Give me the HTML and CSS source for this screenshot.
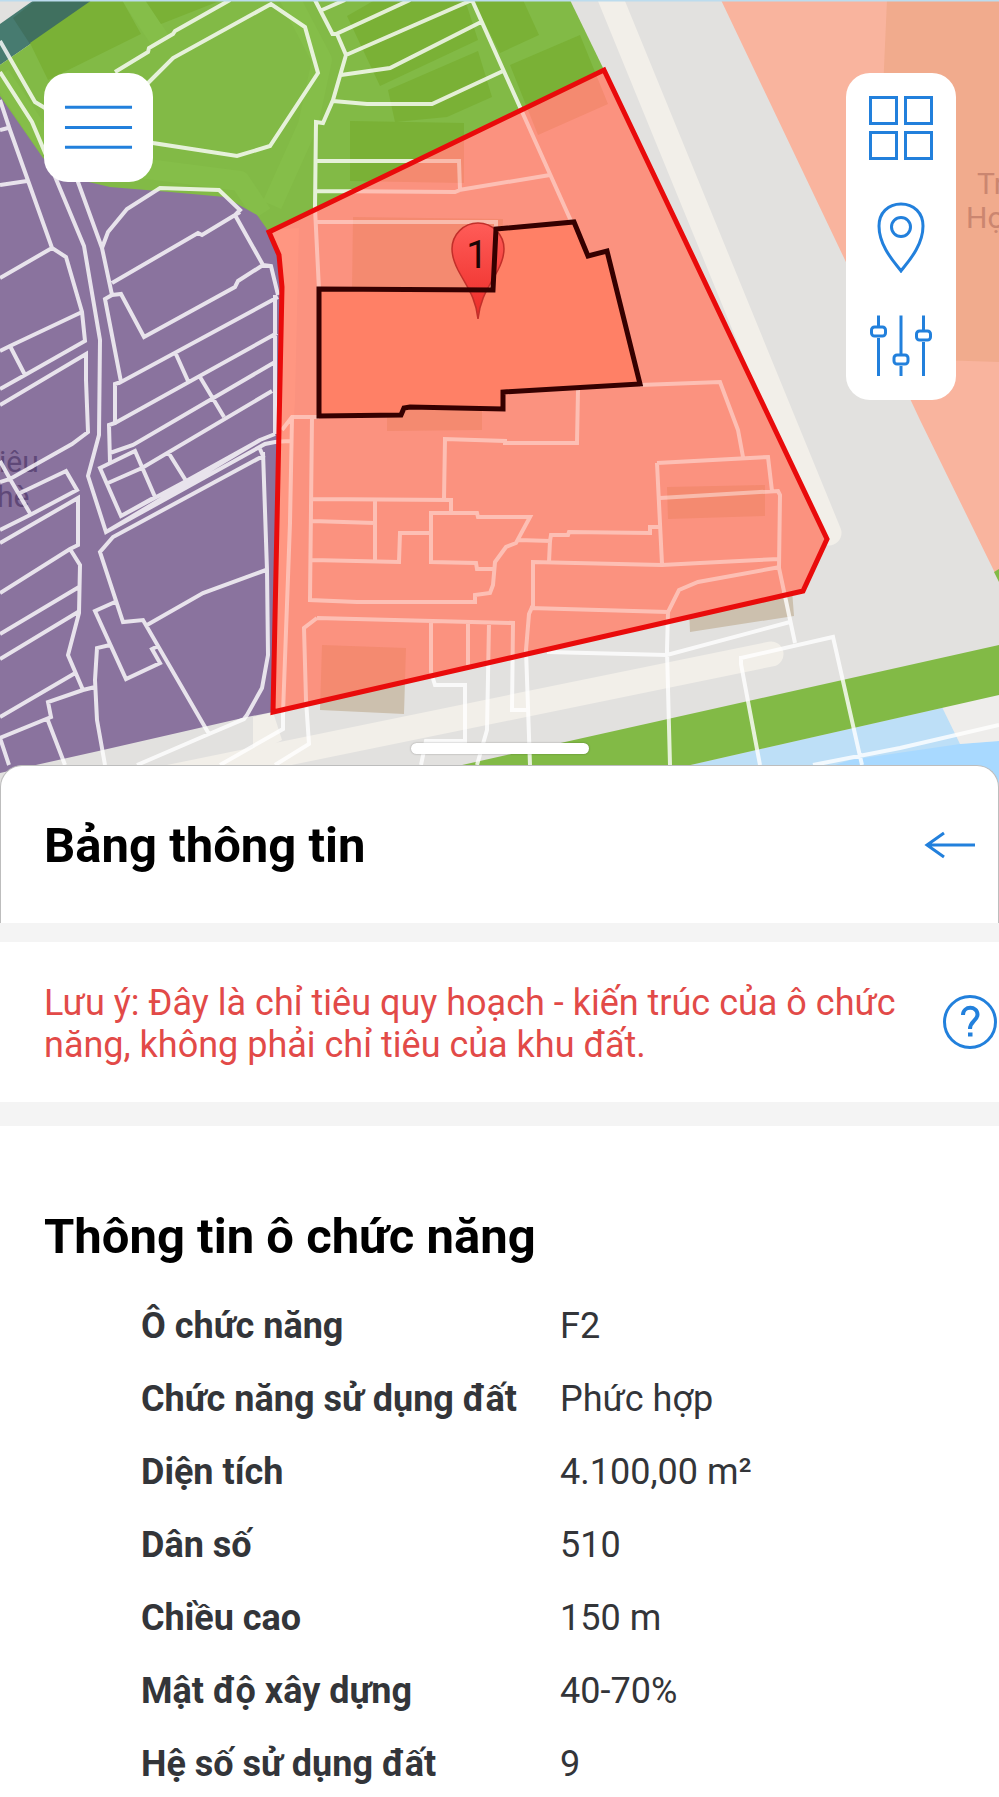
FILE: index.html
```html
<!DOCTYPE html>
<html lang="vi">
<head>
<meta charset="utf-8">
<meta name="viewport" content="width=device-width, initial-scale=1">
<title>Bảng thông tin</title>
<link rel="stylesheet" href="styles.css">
</head>
<body>
<main class="app">
  <section class="map" aria-label="Bản đồ quy hoạch">
    <svg class="map-canvas" viewBox="0 0 999 790" preserveAspectRatio="xMidYMin slice">
      <defs>
        <linearGradient id="pin" x1="0" y1="0" x2="0" y2="1">
          <stop offset="0" stop-color="#ff5c58"/>
          <stop offset="1" stop-color="#ec2b27"/>
        </linearGradient>
        <clipPath id="zone-clip"><path id="zone" d="M269 232L604 70L827 539L803 591L273 712L282 287L279 255Z"/></clipPath>
        <path id="lots" d="M0 41L35 102L45 108L62 142L78 182L102 248L112 295M0 72L32 122L46 155L84 246L100 340L99 435L88 476L106 532L260 440L275 434
          M0 100L10 130L52 248L66 257L82 312L85 341L25 375L0 389M10 346L25 375M82 312L10 346L0 351M0 130L8 128M0 185L27 181M0 278L52 248
          M0 405L86 354L86 380L88 432L72 444L10 479L0 482
          M102 248L108 232L127 209L160 188L219 190L240 210L235 215L263 265L271 266L278 295M112 283L198 233L202 235L240 212
          M112 295L121 294L144 337L235 287L238 281L263 265M112 295L105 299L121 382L278 297M175 352L188 381M200 377L224 417
          M115 423L277 333M121 382L115 384L115 423L109 425L110 462M110 453L133 445L275 362M275 295L275 434
          M100 468L135 451L155 497L121 516ZM108 483L142 468L272 391M168 452L188 484M121 516L188 480L260 440
          M106 532L265 444L275 442L290 441M260 449L263 456L113 537L100 552L123 622L143 620L209 734M263 452L267 570L268 655L262 688L247 715L244 719L209 734L137 765
          M147 625L203 593L266 570M115 602L95 611L126 679L160 663L152 649L158 646M110 645L97 648L95 680L97 720L105 765
          M20 493L66 471L77 490L30 515L0 530M0 461L10 479L31 515M0 543L78 498L78 545L70 549L0 593M70 549L80 565L79 613L68 655L83 690
          M0 634L79 587M0 659L78 612M0 717L77 672M95 687L83 690L48 702L51 717L0 738M47 718L65 765M0 738L9 765
          M148 83L173 58L271 4L305 27L318 73L270 146L237 156L153 143L110 120ZM115 72L148 52L149 48L173 34L175 31L230 0
          M315 0L333 35M322 10L345 0M410 0L336 34L332 34M337 34L346 55L333 100L323 123L316 122L315 208L319 290
          M346 55L472 0M341 75L390 68L481 22M333 101L367 104L432 104L503 71M472 0L571 221M315 161L459 161L460 190L455 192L315 191M459 190L550 175M316 222L496 222L496 228
          M292 418L290 523L283 713L283 729L220 765M282 430L292 417L319 417
          M317 618L304 628L306 700L309 744L275 765M312 417L310 600L357 602L475 602L475 595L490 593L493 585L495 562L506 547L516 543L530 517L478 517L477 513L431 513L431 562L476 563L477 569L494 569
          M312 499L451 500L451 513M312 521L375 523M375 500L375 560M312 560L399 562L400 533L431 533M444 499L445 439L505 441L505 443L577 443L578 390
          M518 540L550 541L551 535L568 535L569 532L650 533L650 527L660 527M550 541L549 562M533 607L533 562L662 565L700 563L779 559M530 608L668 612M533 605L529 614L526 650L530 765
          M657 463L662 564M657 463L768 457L772 491M743 457L738 430L720 382L640 385M660 498L778 491L780 495L779 568L795 643
          M780 567L698 582L679 590L668 612L667 650L670 765M547 652L667 655L790 622M741 658L833 637L862 765M741 656L741 664L760 765
          M317 618L433 621L513 623L512 710L527 710M431 621L431 672L435 685L465 685L465 741L426 741L421 765M468 622L468 665M489 623L487 730L477 765
          M813 765L900 748L999 725"/>
      </defs>

      <rect width="999" height="790" fill="#e2e1df"/>

      <!-- roads -->
      <path d="M609 -5L829 533M771 654L-10 814" fill="none" stroke="#f2efe9" stroke-width="25" stroke-linecap="round"/>
      <path d="M253 717L273 712L282 740L253 755Z" fill="#f2efe9"/>

      <!-- park and canal -->
      <path d="M0 24L34 0H94L0 65Z" fill="#477b70"/>
      <path d="M13 18L36 0H94L30 44Z" fill="#40705f"/>
      <path d="M0 65L94 0H570L606 74L300 260L0 200Z" fill="#82ba46"/>
      <path d="M288 -5L322 60L308 125L272 205M140 168L240 181L262 214M130 -5L160 40M0 75L50 150" fill="none" stroke="#85be49" stroke-width="20" stroke-linejoin="round"/>
      <path d="M30 43L92 0H122L141 34L48 80ZM145 0L161 24L222 0ZM347 16L375 0H465L478 40L380 86ZM388 90L478 51L492 97L447 117L395 122ZM473 0H523L539 35L500 53ZM510 65L580 35L608 104L538 135ZM350 121L464 123V183L350 181Z" fill="#7ab136"/>

      <!-- residential block -->
      <path d="M0 96L43 158L80 180L110 187L170 192L225 197L257 215L269 232L279 255L282 287L273 712L247 717L103 750L0 773Z" fill="#8a739e"/>
      <g class="place place-violet"><text x="-1" y="472">iêu</text><text x="-3" y="507">hè</text></g>

      <!-- education block -->
      <path d="M721 0H999V581L995 573L920 420L845 260Z" fill="#f9b49e"/>
      <path d="M887 0H999V362L880 358L883 90Z" fill="#f1ab8d"/>
      <g class="place place-peach"><text x="977" y="194">Tr</text><text x="966" y="228">Họ</text></g>

      <!-- river bank -->
      <path d="M994 572L999 569V582Z" fill="#82ba46"/>
      <path d="M620 781L999 695V790H600Z" fill="#bddff7"/>
      <path d="M850 760L960 744L999 741V790H760Z" fill="#a8d9ff"/>
      <path d="M942 707L999 694V741L960 744Z" fill="#eeedeb"/>
      <path d="M395 780L999 645V695L620 781Z" fill="#82ba46"/>
      <path d="M322 645L406 648L404 714L320 710ZM689 608L792 590L794 616L690 632Z" fill="#ccc0ae"/>

      <use class="lots" href="#lots"/>

      <!-- planning zone -->
      <use href="#zone" fill="#fb927f"/>
      <g clip-path="url(#zone-clip)">
        <path d="M269 230L299 228L295 400L288 530L284 712H272Z" fill="#ff9681"/>
        <path d="M322 645L406 648L404 714L320 710ZM387 408H482V430L387 431ZM667 487L765 485V516L668 519ZM353 217L503 219L500 290H352ZM350 121L464 123V183L350 181ZM510 65L580 35L608 104L538 135Z" fill="#f48a70"/>
        <use class="lots lots-inside" href="#lots"/>
      </g>
      <use class="zone-line" href="#zone"/>

      <!-- selected parcel -->
      <path d="M319 289L493 290L496 229L574 222L588 256L607 251L640 384L503 392V409L405 407L401 415L319 416Z" fill="#ff8066"/>
      <path d="M478 319C476 298 467 287 458 270C454 262 452 257 452 249A26 26 0 0 1 504 249C504 257 502 262 498 270C489 287 480 298 478 319Z" fill="url(#pin)" stroke="#c22f2a" stroke-width="1.5"/>
      <text class="pin-label" x="477" y="268">1</text>
      <path class="parcel-line" d="M319 289L493 290L496 229L574 222L588 256L607 251L640 384L503 392V409L410 407L404 408L401 415L319 416Z"/>
      <rect width="999" height="1.5" fill="#bcdcee"/>
    </svg>

    <button class="tool-card menu" type="button" aria-label="Menu">
      <svg class="icon" viewBox="0 0 72 72"><path d="M2 15.500H70M2 36H70M2 56H70"/></svg>
    </button>

    <div class="tool-card tools">
      <button class="tool" type="button" aria-label="Lớp bản đồ">
        <svg class="icon" viewBox="0 0 72 72"><path d="M5.500 5.500h26v26h-26zM40.500 5.500h26v26h-26zM5.500 40.500h26v26h-26zM40.500 40.500h26v26h-26z"/></svg>
      </button>
      <button class="tool" type="button" aria-label="Vị trí">
        <svg class="icon" viewBox="0 0 72 72"><path d="M36 70C31 63 14 46 14 25C14 12 23 3 36 3S58 12 58 25C58 46 41 63 36 70Z"/><circle cx="36" cy="26" r="9.500"/></svg>
      </button>
      <button class="tool" type="button" aria-label="Bộ lọc">
        <svg class="icon" viewBox="0 0 72 72"><path d="M13.500 5.500V16M13.500 28V66M36 5.500V44M36 56V66M58.500 5.500V20M58.500 32V66"/><rect x="6.500" y="17" width="14" height="9" rx="3"/><rect x="29" y="45" width="14" height="9" rx="3"/><rect x="51.500" y="21" width="14" height="9" rx="3"/></svg>
      </button>
    </div>
    <div class="handle"></div>
  </section>

  <section class="panel">
    <header class="panel-head">
      <h1 class="title">Bảng thông tin</h1>
      <button class="plain back" type="button" aria-label="Quay lại">
        <svg class="icon" viewBox="0 0 52 30"><path d="M51 14H3M20 2L3 14L20 26"/></svg>
      </button>
    </header>

    <div class="note">
      <p class="note-text">Lưu ý: Đây là chỉ tiêu quy hoạch - kiến trúc của ô chức năng, không phải chỉ tiêu của khu đất.</p>
      <button class="plain help" type="button" aria-label="Trợ giúp">
        <svg class="icon" viewBox="0 0 54 54"><circle cx="27" cy="27" r="25.500"/><path class="mark" d="M20 20C20 10.500 34.500 10.500 34.500 19.500C34.500 25.500 27 26 27 34"/><rect class="dot" x="25" y="37.500" width="4.500" height="4"/></svg>
      </button>
    </div>

    <div class="details">
      <h2 class="title">Thông tin ô chức năng</h2>
      <table class="facts">
        <tbody>
          <tr><th scope="row">Ô chức năng</th><td>F2</td></tr>
          <tr><th scope="row">Chức năng sử dụng đất</th><td>Phức hợp</td></tr>
          <tr><th scope="row">Diện tích</th><td>4.100,00 m²</td></tr>
          <tr><th scope="row">Dân số</th><td>510</td></tr>
          <tr><th scope="row">Chiều cao</th><td>150 m</td></tr>
          <tr><th scope="row">Mật độ xây dựng</th><td>40-70%</td></tr>
          <tr><th scope="row">Hệ số sử dụng đất</th><td>9</td></tr>
        </tbody>
      </table>
    </div>
  </section>
</main>
</body>
</html>
```
FILE: styles.css
```css
* {
  box-sizing: border-box;
}

body {
  margin: 0;
  background: #fff;
  color: #333539;
  font-family: Roboto, "Noto Sans", sans-serif;
}

.app {
  height: 100vh;
  overflow: hidden;
}

/* Map */
.map {
  position: relative;
}

.map-canvas {
  display: block;
  width: 100%;
  aspect-ratio: 999 / 790;
}

.lots {
  fill: none;
  stroke: #fff;
  stroke-width: 4;
  stroke-opacity: 0.8;
}

.lots-inside {
  stroke-opacity: 0.42;
}

.zone-line {
  fill: none;
  stroke: #e90b0b;
  stroke-width: 5;
}

.parcel-line {
  fill: none;
  stroke: #350000;
  stroke-width: 5;
}

.place {
  font-size: 30px;
}

.place-violet {
  fill: #5f4878;
}

.place-peach {
  fill: #cb8670;
}

.pin-label {
  font-size: 38px;
  fill: #1c0505;
  text-anchor: middle;
}

.icon {
  display: block;
  fill: none;
  stroke: #2280dc;
  stroke-width: 3;
}

.tool-card {
  position: absolute;
  top: 73px;
  background: #fff;
  border: 0;
  border-radius: 24px;
}

.menu {
  left: 44px;
  width: 109px;
  height: 109px;
  padding: 19px;
}

.tools {
  right: 43px;
  width: 110px;
}

.tool {
  display: flex;
  align-items: center;
  justify-content: center;
  width: 100%;
  height: 109px;
  padding: 0 19px;
  background: none;
  border: 0;
}

.tool .icon {
  width: 72px;
}

.handle {
  position: absolute;
  left: 50%;
  bottom: 36px;
  width: 178px;
  height: 11px;
  margin-left: -89px;
  background: #fff;
  border-radius: 6px;
  box-shadow: 0 0 2px rgba(0, 0, 0, 0.35);
}

/* Information panel */
.panel {
  position: relative;
  margin-top: -25px;
}

.panel-head {
  display: flex;
  align-items: center;
  justify-content: space-between;
  height: 158px;
  padding: 2px 22px 0 43px;
  background: #fff;
  border: 1px solid #bdbdbd;
  border-bottom: 0;
  border-radius: 22px 22px 0 0;
}

.title {
  margin: 0;
  color: #000;
  font-size: 49px;
  font-weight: 700;
  line-height: 56px;
}

.plain {
  flex: none;
  padding: 0;
  background: none;
  border: 0;
}

.back {
  width: 52px;
}

.note {
  display: flex;
  align-items: center;
  justify-content: space-between;
  gap: 24px;
  padding: 36px 2px 36px 44px;
  background: #fff;
  border-top: 19px solid #f4f4f4;
  border-bottom: 24px solid #f4f4f4;
}

.note-text {
  margin: 0;
  padding-top: 4px;
  color: #e24a48;
  font-size: 36px;
  line-height: 42px;
}

.help {
  width: 54px;
}

.help .mark {
  stroke-width: 4;
}

.help .dot {
  fill: #2280dc;
  stroke: none;
}

.details {
  padding: 83px 44px 0;
}

.facts {
  width: calc(100% - 97px);
  margin: 24px 0 0 97px;
  border-collapse: collapse;
  table-layout: fixed;
  font-size: 36px;
  line-height: 42px;
}

.facts th,
.facts td {
  height: 73px;
  padding: 0;
  text-align: left;
  white-space: nowrap;
}

.facts th {
  width: 419px;
  font-weight: 700;
}
```
